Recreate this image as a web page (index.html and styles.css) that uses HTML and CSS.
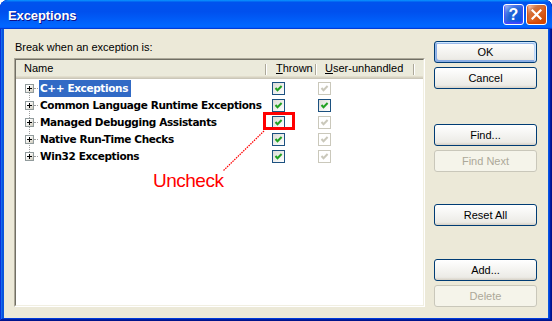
FILE: index.html
```html
<!DOCTYPE html>
<html lang="en">
<head>
  <meta charset="UTF-8">
  <title>Exceptions</title>
  <link rel="stylesheet" href="styles.css">
</head>
<body>

  <div class="window">
    <div class="titlebar">
      <span class="title">Exceptions</span>
      <div class="title-buttons">
        <span class="tb-btn help">?</span>
        <span class="tb-btn close">
          <svg width="11" height="11" viewBox="0 0 11 11"><path d="M1.5 1.5 L9.5 9.5 M9.5 1.5 L1.5 9.5" stroke="#fff" stroke-width="2.2" stroke-linecap="square"/></svg>
        </span>
      </div>
    </div>

    <div class="client">
      <div class="left">
        <div class="label">Break when an exception is:</div>
        <div class="list">
          <div class="list-inner">
            <div class="header cols">
              <div class="hcell name-h">Name</div>
              <div class="hcell thrown-h"><u>T</u>hrown</div>
              <div class="hcell user-h"><u>U</u>ser-unhandled</div>
              <div class="hcell"></div>
            </div>

            <div class="rows">
              <div class="row cols">
                <div class="name-cell">
                  <svg class="expander" width="9" height="9" viewBox="0 0 9 9"><rect x="0.5" y="0.5" width="8" height="8" fill="url(#boxfill)" stroke="#919B9C"/><path d="M2 4.5h5M4.5 2v5" stroke="#000"/>
                    <defs><linearGradient id="boxfill" x1="0" y1="0" x2="1" y2="1"><stop offset="0.3" stop-color="#fff"/><stop offset="1" stop-color="#C9C4B4"/></linearGradient></defs></svg>
                  <span class="twig"></span>
                  <span class="node selected">C++ Exceptions</span>
                </div>
                <div class="chk-cell thrown"><span class="chk on"></span></div>
                <div class="chk-cell user"><span class="chk off"></span></div>
              </div>

              <div class="row cols">
                <div class="name-cell">
                  <svg class="expander" width="9" height="9" viewBox="0 0 9 9"><rect x="0.5" y="0.5" width="8" height="8" fill="url(#boxfill)" stroke="#919B9C"/><path d="M2 4.5h5M4.5 2v5" stroke="#000"/></svg>
                  <span class="twig"></span>
                  <span class="node">Common Language Runtime Exceptions</span>
                </div>
                <div class="chk-cell thrown"><span class="chk on"></span></div>
                <div class="chk-cell user"><span class="chk on"></span></div>
              </div>

              <div class="row cols">
                <div class="name-cell">
                  <svg class="expander" width="9" height="9" viewBox="0 0 9 9"><rect x="0.5" y="0.5" width="8" height="8" fill="url(#boxfill)" stroke="#919B9C"/><path d="M2 4.5h5M4.5 2v5" stroke="#000"/></svg>
                  <span class="twig"></span>
                  <span class="node">Managed Debugging Assistants</span>
                </div>
                <div class="chk-cell thrown"><span class="chk on"></span></div>
                <div class="chk-cell user"><span class="chk off"></span></div>
              </div>

              <div class="row cols">
                <div class="name-cell">
                  <svg class="expander" width="9" height="9" viewBox="0 0 9 9"><rect x="0.5" y="0.5" width="8" height="8" fill="url(#boxfill)" stroke="#919B9C"/><path d="M2 4.5h5M4.5 2v5" stroke="#000"/></svg>
                  <span class="twig"></span>
                  <span class="node">Native Run-Time Checks</span>
                </div>
                <div class="chk-cell thrown"><span class="chk on"></span></div>
                <div class="chk-cell user"><span class="chk off"></span></div>
              </div>

              <div class="row cols">
                <div class="name-cell">
                  <svg class="expander" width="9" height="9" viewBox="0 0 9 9"><rect x="0.5" y="0.5" width="8" height="8" fill="url(#boxfill)" stroke="#919B9C"/><path d="M2 4.5h5M4.5 2v5" stroke="#000"/></svg>
                  <span class="twig"></span>
                  <span class="node">Win32 Exceptions</span>
                </div>
                <div class="chk-cell thrown"><span class="chk on"></span></div>
                <div class="chk-cell user"><span class="chk off"></span></div>
              </div>
            </div>
          </div>
        </div>
      </div>

      <div class="buttons">
        <button class="btn default">OK</button>
        <button class="btn gap-s">Cancel</button>
        <button class="btn gap-find">Find...</button>
        <button class="btn gap-s" disabled>Find Next</button>
        <button class="btn gap-reset">Reset All</button>
        <button class="btn gap-add">Add...</button>
        <button class="btn gap-s" disabled>Delete</button>
      </div>
    </div>

    <!-- annotation drawn over the screenshot -->
    <div class="callout-box"></div>
    <svg class="callout-line" width="552" height="321"><line x1="264" y1="131" x2="223" y2="171" stroke="#f00" stroke-width="1.2" stroke-dasharray="1.5 1"/></svg>
    <div class="callout-text">Uncheck</div>
  </div>

</body>
</html>
```

FILE: styles.css
```css
* {
  box-sizing: border-box;
}

body {
  margin: 0;
  background: #fff;
  font-family: "Liberation Sans", Arial, sans-serif;
  font-size: 11px;
  color: #000;
}

.window {
  position: relative;
  width: 552px;
  height: 321px;
  display: flex;
  flex-direction: column;
  padding: 0 4px 3px;
  background: #0855DD;
  border-radius: 8px 7px 0 0;
  box-shadow: inset -1px -1px #00138c, inset 1px 1px #0831d9, inset -2px -2px #001ea0, inset 2px 2px #166aee, inset -3px -3px #003bda, inset 3px 3px #0855dd;
  overflow: hidden;
}

/* title bar */
.titlebar {
  height: 29px;
  margin: 0 -4px;
  padding: 2px 5px 0 8px;
  display: flex;
  align-items: center;
  justify-content: space-between;
  background: linear-gradient(180deg, #0997ff, #0053ee 8%, #0050ee 40%, #06f 88%, #06f 93%, #005bff 95%, #003dd7 96%, #003dd7);
  border-radius: 8px 7px 0 0;
}

.title {
  color: #fff;
  font-weight: bold;
  font-size: 13px;
  letter-spacing: -0.1px;
  text-shadow: 1px 1px #0f1089;
  margin-top: -1px;
}

.title-buttons {
  display: flex;
  gap: 2px;
  margin-top: -2px;
}

.tb-btn {
  width: 21px;
  height: 21px;
  border: 1px solid #fff;
  border-radius: 3px;
  display: flex;
  align-items: center;
  justify-content: center;
  color: #fff;
  font-weight: bold;
  font-size: 16px;
}

.help {
  background: radial-gradient(circle at 90% 90%, #0054e9 0%, #2263d5 55%, #4479e4 70%, #a3bbec 90%, #fff 100%);
  box-shadow: inset 0 -1px 2px 1px #4646ff;
}

.close {
  background: radial-gradient(circle at 90% 90%, #cc4600 0%, #dc6527 55%, #cd7546 70%, #ffccb2 90%, #fff 100%);
  box-shadow: inset 0 -1px 2px 1px #da4600;
}

/* client area */
.client {
  flex: 1;
  display: flex;
  gap: 9px;
  padding: 12px 11px 0 10px;
  background: #ECE9D8;
}

.left {
  width: 411px;
}

.label {
  line-height: 13px;
  padding-left: 1px;
}

.list {
  margin-top: 4px;
  height: 249px;
  border: 1px solid;
  border-color: #ACA899 #fff #fff #ACA899;
}

.list-inner {
  height: 100%;
  background: #fff;
  border: 1px solid;
  border-color: #716F64 #F1EFE2 #F1EFE2 #716F64;
}

.cols {
  display: grid;
  grid-template-columns: 251px 50px 98px 1fr;
}

.header {
  height: 19px;
  background: #EBEADB;
  box-shadow: inset 0 -1px #CBC7B8, inset 0 -2px #D6D2C2, inset 0 -3px #E2DECD;
}

.hcell {
  line-height: 17px;
  padding-left: 8px;
  background:
    linear-gradient(#ACA899, #ACA899) right 1px top 4px / 1px 11px no-repeat,
    linear-gradient(#fff, #fff) right 0 top 4px / 1px 11px no-repeat;
}

.thrown-h {
  padding-left: 9px;
}

.hcell:last-child {
  background: none;
}

.rows {
  position: relative;
  padding-top: 1px;
}

/* vertical dotted line of the tree */
.rows::before {
  content: "";
  position: absolute;
  left: 13px;
  top: 9px;
  height: 68px;
  border-left: 1px dotted #A0A0A0;
}

.row {
  height: 17px;
}

.name-cell {
  display: flex;
  align-items: center;
  padding-left: 9px;
  overflow: visible;
}

.expander {
  position: relative;
  flex: none;
}

.twig {
  flex: none;
  width: 4px;
  border-top: 1px dotted #A0A0A0;
  margin-right: 1px;
}

.node {
  flex: none;
  font-family: "DejaVu Sans", Verdana, sans-serif;
  font-weight: bold;
  font-size: 10.5px;
  letter-spacing: -0.38px;
  line-height: 17px;
  padding: 0 3px 0 1px;
  white-space: nowrap;
}

.node.selected {
  background: #316AC5;
  color: #fff;
}

.chk-cell {
  padding-top: 2px;
}

.chk-cell.thrown {
  padding-left: 5px;
}

.chk-cell.user {
  padding-left: 1px;
}

.chk {
  display: block;
  width: 13px;
  height: 13px;
  border: 1px solid #1C5180;
  background: linear-gradient(135deg, #DCDCD7, #fff);
}

.chk::after {
  content: "";
  display: block;
  width: 11px;
  height: 11px;
  background: url("data:image/svg+xml,%3Csvg xmlns='http://www.w3.org/2000/svg' width='11' height='11' viewBox='0 0 11 11'%3E%3Cpath d='M2.5 5 L4.5 7.2 L8.6 3' fill='none' stroke='%2321A121' stroke-width='2'/%3E%3C/svg%3E") no-repeat;
}

.chk.off {
  border-color: #CAC8BB;
  background: #fff;
}

.chk.off::after {
  background-image: url("data:image/svg+xml,%3Csvg xmlns='http://www.w3.org/2000/svg' width='11' height='11' viewBox='0 0 11 11'%3E%3Cpath d='M2.5 5 L4.5 7.2 L8.6 3' fill='none' stroke='%23CAC8BB' stroke-width='2'/%3E%3C/svg%3E");
}

/* push buttons */
.buttons {
  width: 103px;
  display: flex;
  flex-direction: column;
}

.btn {
  height: 22px;
  width: 103px;
  font-family: "Liberation Sans", Arial, sans-serif;
  font-size: 11px;
  color: #000;
  border: 1px solid #003C74;
  border-radius: 3px;
  background: linear-gradient(180deg, #fff, #ECEBE6 86%, #D6D0C5);
  padding: 0;
}

.btn.default {
  box-shadow: inset -1px 1px #cee7ff, inset 1px 2px #98b8ea, inset -2px 2px #bcd4f6, inset 1px -1px #89ade4, inset 2px -2px #89ade4;
}

.btn:disabled {
  color: #ACA899;
  border-color: #C9C7BA;
  background: #F5F4EA;
}

.gap-s {
  margin-top: 4px;
}

.gap-find {
  margin-top: 35px;
}

.gap-reset {
  margin-top: 32px;
}

.gap-add {
  margin-top: 33px;
}

/* red annotation */
.callout-box {
  position: absolute;
  left: 263px;
  top: 112px;
  width: 32px;
  height: 18px;
  border: 3px solid #f00;
}

.callout-line {
  position: absolute;
  left: 0;
  top: 0;
  pointer-events: none;
}

.callout-text {
  position: absolute;
  left: 153px;
  top: 171px;
  color: #f00;
  font-size: 19px;
  line-height: 19px;
  letter-spacing: -0.5px;
}
```
